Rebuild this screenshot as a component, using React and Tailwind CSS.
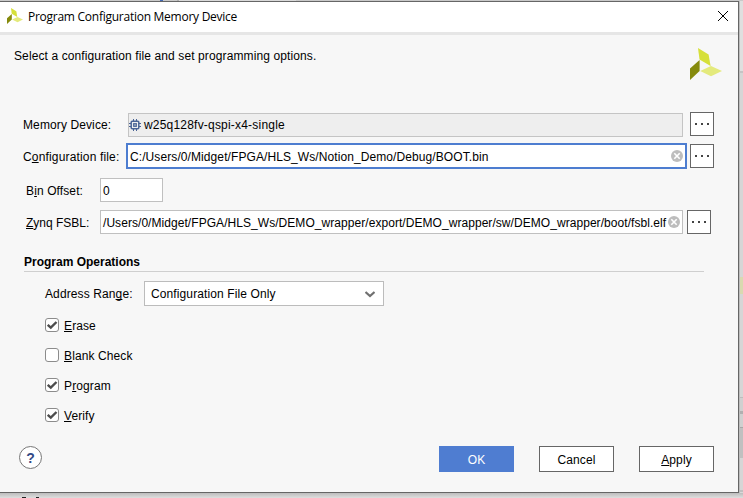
import React from "react";

function Logo({ className }) {
  return (
    <svg className={className} viewBox="0 0 32 32">
      <path d="M8 0 L18.6 6.5 L20.6 18 L9.5 11.5 Z" fill="#d6e03a" />
      <path d="M0 20.5 L9.6 12 L9.6 23 L0 32 Z" fill="#858a0c" />
      <path d="M10.2 23 L21 18 L32 23 L21 28.3 Z" fill="#e4ea7c" />
    </svg>
  );
}

function U({ children }) {
  return <span className="underline decoration-1 underline-offset-1 [text-decoration-skip-ink:none]">{children}</span>;
}

function Chip() {
  return (
    <svg className="h-3 w-3 shrink-0" viewBox="0 0 12 12" fill="none" stroke="#4a6496">
      <path d="M4.5 0V2M7.5 0V2M4.5 10V12M7.5 10V12M0 4.5H2M0 7.5H2M10 4.5H12M10 7.5H12" />
      <rect x="2.2" y="2.2" width="7.6" height="7.6" rx="1" strokeWidth="1.5" />
      <rect x="4.75" y="4.75" width="2.5" height="2.5" strokeWidth="1.3" />
    </svg>
  );
}

function Clear() {
  return (
    <svg className="h-3 w-3 shrink-0" viewBox="0 0 12 12">
      <circle cx="6" cy="6" r="6" fill="#bdbdbd" />
      <path d="M3.3 3.3L8.7 8.7M8.7 3.3L3.3 8.7" stroke="#fff" strokeWidth="1.6" />
    </svg>
  );
}

function Dots({ className }) {
  return (
    <button className={`flex h-6 w-6 shrink-0 items-center justify-center gap-1 border border-[#666] bg-white ${className}`}>
      <i className="h-0.5 w-0.5 bg-[#444]" />
      <i className="h-0.5 w-0.5 bg-[#444]" />
      <i className="h-0.5 w-0.5 bg-[#444]" />
    </button>
  );
}

function Check({ on, children }) {
  return (
    <label className="ml-[45px] flex h-[30px] items-center">
      <span className="flex h-3.5 w-3.5 items-center justify-center rounded-[3px] border border-[#8c8c8c] bg-white">
        {on && (
          <svg className="h-3 w-3 shrink-0" viewBox="0 0 12 12" fill="none" stroke="#4d4d4d" strokeWidth="2.4">
            <path d="M1.7 5.8L4.8 8.6L10.5 3" />
          </svg>
        )}
      </span>
      <span className="ml-[5px] pt-px">{children}</span>
    </label>
  );
}

export default function App() {
  return (
    <div className="flex h-[498px] w-[743px] flex-col overflow-hidden bg-[#d9d9d9] font-['Liberation_Sans',Arial,sans-serif] text-[12px] leading-4 tracking-[0.11px] whitespace-nowrap text-black">
      <div className="flex h-px">
        <div className="w-[160px] bg-[#c9c9c9]" />
        <div className="w-[3px] bg-[#4268b4]" />
        <div className="w-[14px] bg-[#c9c9c9]" />
        <div className="w-[2px] bg-[#b0b0b0]" />
        <div className="w-[117px] bg-[#d9d9d9]" />
        <div className="flex-1 bg-[#c9c9c9]" />
      </div>
      <div className="flex h-[492px]">
        <main className="flex w-[739px] flex-col border-t border-r border-b border-[#666] bg-[#f7f7f7]">
          <header className="flex h-[33px] shrink-0 items-center border-b-3 border-[#e6e6e6] bg-white">
            <Logo className="mb-0.5 ml-[7px] h-4 w-4" />
            <h1 className="ml-[5px] font-['Open_Sans','Noto_Sans',sans-serif] text-[12px] tracking-[-0.26px]">Program Configuration Memory Device</h1>
            <svg className="mr-2.5 mb-0.5 ml-auto h-2.5 w-2.5" viewBox="0 0 10 10" stroke="#000" strokeWidth="1">
              <path d="M0 0L10 10M10 0L0 10" />
            </svg>
          </header>

          <div className="flex h-[77px] justify-between">
            <p className="mt-[13px] ml-3.5">Select a configuration file and set programming options.</p>
            <Logo className="mt-[13px] mr-4 h-8 w-8" />
          </div>

          <div className="flex h-[31px]">
            <label className="mt-[5px] ml-[23px] w-[105px]">Memory Device:</label>
            <div className="mt-px flex h-6 w-[555px] items-center border border-[#c4c4c4] bg-[#eee]">
              <Chip />
              <span className="ml-[3px] tracking-[0.2px]">w25q128fv-qspi-x4-single</span>
            </div>
            <Dots className="ml-[7px]" />
          </div>

          <div className="flex h-[35px]">
            <label className="mt-1.5 ml-[23px] w-[103px] tracking-[0.16px]">C<U>o</U>nfiguration file:</label>
            <div className="flex h-[26px] w-[561px] items-center justify-between border-2 border-[#4d7dd0] bg-white pr-0.5 pl-0.5">
              <span className="pt-0.5 tracking-[0.09px]">C:/Users/0/Midget/FPGA/HLS_Ws/Notion_Demo/Debug/BOOT.bin</span>
              <Clear />
            </div>
            <Dots className="mt-px ml-[3px]" />
          </div>

          <div className="flex h-8">
            <label className="mt-[5px] ml-[26px] w-[74px]">B<U>i</U>n Offset:</label>
            <div className="flex h-6 w-[63px] items-center border border-[#c0c0c0] bg-white pt-0.5 pl-0.5">0</div>
          </div>

          <div className="flex h-11">
            <label className="mt-[5px] ml-[26px] w-[74px] tracking-normal"><U>Z</U>ynq FSBL:</label>
            <div className="flex h-6 w-[583px] items-center justify-between border border-[#c0c0c0] bg-white pr-0.5 pl-0.5">
              <span className="pt-0.5 tracking-[0.055px]">/Users/0/Midget/FPGA/HLS_Ws/DEMO_wrapper/export/DEMO_wrapper/sw/DEMO_wrapper/boot/fsbl.elf</span>
              <Clear />
            </div>
            <Dots className="ml-1" />
          </div>

          <h2 className="mr-[34px] ml-6 h-[18px] border-b border-[#cfcfcf] font-bold tracking-normal">Program Operations</h2>

          <div className="mt-[9px] flex h-[29px]">
            <label className="mt-[5px] ml-[45px] w-[99px]">Address Ran<U>g</U>e:</label>
            <div className="flex h-[25px] w-60 items-center justify-between border border-[#bcbcbc] bg-white pr-2 pl-1.5">
              <span>Configuration File Only</span>
              <svg className="h-2.5 w-2.5" viewBox="0 0 10 10" fill="none" stroke="#707070" strokeWidth="2.2">
                <path d="M.5 3L5 7L9.5 3" />
              </svg>
            </div>
          </div>

          <Check on><U>E</U>rase</Check>
          <Check><U>B</U>lank Check</Check>
          <Check on>P<U>r</U>ogram</Check>
          <Check on><U>V</U>erify</Check>

          <footer className="mt-4 flex h-[26px] pr-6 pl-[19px]">
            <button className="mr-auto flex h-[23px] w-[23px] items-center justify-center rounded-full border border-[#777] bg-white text-[14px] font-bold text-[#324a86]">?</button>
            <button className="w-[75px] bg-[#4f7dd1] pt-0.5 text-white">OK</button>
            <button className="ml-[25px] w-[75px] border border-[#666] bg-white pt-0.5">Cancel</button>
            <button className="ml-[25px] w-[75px] border border-[#666] bg-white pt-0.5"><U>A</U>pply</button>
          </footer>
        </main>

        <aside className="flex flex-1 flex-col border-l border-[#bdbdbd] bg-[#d9d9d9]">
          <div className="h-[70px] bg-[#dfdfdf]" />
          <div className="h-0.5 bg-[#c4c4c4]" />
          <div className="h-[204px] bg-[#d6d6d6]" />
          <div className="h-[17px] bg-[#d9d9b0]" />
          <div className="h-[103px] bg-[#d6d6d6]" />
          <div className="h-px bg-[#bdbdbd]" />
          <div className="h-[13px] bg-[#d0d0d0]" />
          <div className="h-[3px] bg-[#b0b0b0]" />
          <div className="h-[13px] bg-[#d0d0d0]" />
          <div className="h-px bg-[#a8a8a8]" />
          <div className="h-[30px] bg-[#c0c0c0]" />
          <div className="h-8 bg-[#d6d6d6]" />
          <div className="h-0.5 bg-[#c0c0c0]" />
        </aside>
      </div>
      <div className="flex h-[5px] items-end bg-linear-to-b from-[#bdbdbd] to-[#dedede] pl-[22px]">
        <i className="h-px w-1 bg-[#222]" />
        <i className="ml-2.5 h-px w-[3px] bg-[#222]" />
      </div>
    </div>
  );
}
